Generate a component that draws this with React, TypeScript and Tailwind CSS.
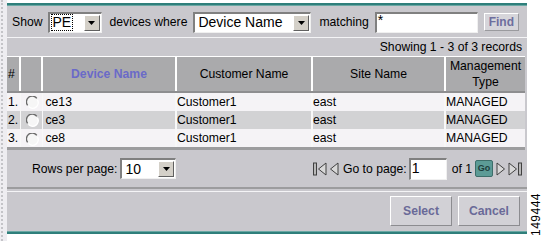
import React from 'react';

const font = { fontFamily: '"Liberation Sans", Arial, sans-serif' };

/**
 * Classic inset select box with a grey arrow button
 */
function OldSelect({ value, width, dotted }: { value: string; width: string; dotted?: boolean }) {
  return (
    <div
      className={`${width} shrink-0 h-[21px] flex items-stretch bg-white border-t-2 border-l-2 border-t-[#808080] border-l-[#808080] border-b border-r border-b-[#f0f0f0] border-r-[#f0f0f0]`}
    >
      <div className="flex-1 flex items-center pl-[2px] min-w-0">
        <span
          className={`text-[14px] leading-[15px] text-black px-[1px] whitespace-nowrap ${dotted ? 'outline outline-1 outline-dotted outline-black' : ''}`}
        >
          {value}
        </span>
      </div>
      <div className="w-[16px] m-[1px] bg-[#d4d0c8] flex items-center justify-center border-t border-l border-t-white border-l-white border-b border-r border-b-[#606060] border-r-[#606060]">
        <svg width="7" height="4" viewBox="0 0 7 4">
          <polygon points="0,0 7,0 3.5,4" fill="#000" />
        </svg>
      </div>
    </div>
  );
}

function Radio() {
  return (
    <svg width="13" height="13" viewBox="0 0 13 13">
      <circle cx="6.5" cy="6.5" r="6" fill="#f6f6f6" />
      <path d="M10.8 2.4 A5.6 5.6 0 0 0 1.6 9.4" fill="none" stroke="#6a6a6a" strokeWidth="1.4" />
      <path d="M2.6 10.6 A5.6 5.6 0 0 0 11.4 3.8" fill="none" stroke="#ffffff" strokeWidth="1.4" />
    </svg>
  );
}

function Tri({ dir, bar }: { dir: 'l' | 'r'; bar?: boolean }) {
  const w = bar ? 14 : 9;
  return (
    <svg width={w} height="14" viewBox={`0 0 ${w} 14`} className="shrink-0">
      {dir === 'l' ? (
        <>
          {bar && <rect x="0.5" y="1" width="3" height="12" fill="#b8b8b8" stroke="#404040" strokeWidth="1" />}
          <polygon
            points={`${w - 1},1 ${w - 1},13 ${w - 8.5},7`}
            fill="#d8d8d8"
            stroke="#404040"
            strokeWidth="1"
          />
        </>
      ) : (
        <>
          <polygon points="1,1 1,13 8.5,7" fill="#d8d8d8" stroke="#404040" strokeWidth="1" />
          {bar && <rect x={w - 3.5} y="1" width="3" height="12" fill="#b8b8b8" stroke="#404040" strokeWidth="1" />}
        </>
      )}
    </svg>
  );
}

const rows = [
  { n: '1.', dev: 'ce13', cust: 'Customer1', site: 'east', type: 'MANAGED' },
  { n: '2.', dev: 'ce3', cust: 'Customer1', site: 'east', type: 'MANAGED' },
  { n: '3.', dev: 'ce8', cust: 'Customer1', site: 'east', type: 'MANAGED' },
];

export default function App() {
  return (
    <div className="w-[544px] h-[241px] bg-white flex text-[12.2px] text-black whitespace-nowrap" style={font}>
      {/* left dotted strip */}
      <div className="w-[7px] shrink-0 h-full bg-[#eeedf1] flex justify-start">
        <div className="w-[2px] ml-[1px] h-full border-l-2 border-dotted border-[#c4c4c8]" />
      </div>

      {/* main panel */}
      <div className="w-[520px] shrink-0 flex flex-col">
        <div className="h-[3px] bg-white" />
        <div className="h-[3px] bg-[#2f7f7b] border-b border-[#6aa8a4]" />

        <div className="flex-1 bg-[#c9c8cd] flex flex-col">
          {/* filter row */}
          <div className="h-[31px] flex items-center pl-[5px] pt-[1px]">
            <span className="shrink-0">Show</span>
            <div className="ml-[5px]">
              <OldSelect value="PE" width="w-[54px]" dotted />
            </div>
            <span className="ml-[8px] shrink-0">devices where</span>
            <div className="ml-[6px]">
              <OldSelect value="Device Name" width="w-[118px]" />
            </div>
            <span className="ml-[8px] shrink-0">matching</span>
            <div className="ml-[6px] shrink-0 w-[103px] h-[21px] bg-white border-t-2 border-l-2 border-t-[#808080] border-l-[#808080] border-b border-r border-b-[#f0f0f0] border-r-[#f0f0f0] text-[14px] leading-[12px] pl-[1px]">
              *
            </div>
            <div className="ml-[6px] shrink-0 w-[35px] h-[18px] bg-[#d6d5da] border border-t-white border-l-white border-b-[#9a9a9e] border-r-[#9a9a9e] flex items-center justify-center text-[12px] font-bold text-[#6e6e9e]">
              Find
            </div>
          </div>

          <div className="h-[1px] bg-[#f4f4f6]" />

          {/* record count */}
          <div className="h-[18px] flex items-center justify-end pr-[5px]">Showing 1 - 3 of 3 records</div>

          {/* table */}
          <table className="border-collapse w-[518px] table-fixed">
            <colgroup>
              <col className="w-[13px]" />
              <col className="w-[22px]" />
              <col className="w-[134px]" />
              <col className="w-[136px]" />
              <col className="w-[133px]" />
              <col className="w-[80px]" />
            </colgroup>
            <thead>
              <tr className="h-[34px] bg-[#aaaaac] border-t border-white">
                <th className="text-left font-normal pl-[1px]">#</th>
                <th className="border-l-2 border-white" />
                <th className="border-l-2 border-white font-bold text-[#6a6ac8]">Device Name</th>
                <th className="border-l-2 border-white font-normal">Customer Name</th>
                <th className="border-l-2 border-white font-normal">Site Name</th>
                <th className="border-l-2 border-white font-normal leading-[16px]">
                  Management
                  <br />
                  Type
                </th>
              </tr>
              <tr className="h-[2px] bg-[#8e8e90]">
                <th colSpan={6} />
              </tr>
            </thead>
            <tbody>
              {rows.map((r, i) => (
                <tr key={r.n} className={`h-[18px] ${i === 1 ? 'bg-[#d2d2d4]' : 'bg-[#f5f3f6]'}`}>
                  <td className="pl-[1px]">{r.n}</td>
                  <td className="border-l border-[#f8f8f8] pl-[5px] pt-[2px]">
                    <Radio />
                  </td>
                  <td className="border-l border-[#f8f8f8] pl-[3px]">{r.dev}</td>
                  <td className="border-l-2 border-[#f8f8f8]">{r.cust}</td>
                  <td className="border-l-2 border-[#f8f8f8]">{r.site}</td>
                  <td className="border-l-2 border-[#f8f8f8]">{r.type}</td>
                </tr>
              ))}
            </tbody>
          </table>
          <div className="h-[3px] w-[518px] bg-[#9c9c9e]" />

          {/* pagination */}
          <div className="h-[37px] flex items-center pl-[25px] pr-[5px]">
            <span>Rows per page:</span>
            <div className="ml-[3px]">
              <OldSelect value="10" width="w-[56px]" />
            </div>
            <div className="flex-1" />
            <div className="flex items-center gap-[3px]">
              <Tri dir="l" bar />
              <Tri dir="l" />
            </div>
            <span className="ml-[4px]">Go to page:</span>
            <div className="ml-[2px] shrink-0 w-[38px] h-[22px] bg-white border-t-2 border-l-2 border-t-[#808080] border-l-[#808080] border-b border-r border-b-[#f0f0f0] border-r-[#f0f0f0] text-[14px] leading-[16px] pl-[1px]">
              1
            </div>
            <span className="ml-[5px]">of 1</span>
            <div className="ml-[3px] shrink-0 w-[18px] h-[17px] rounded-[2px] bg-[#5c9b96] border border-[#3d6e6a] flex items-center justify-center text-[9px] font-bold text-[#1e3e3c]">
              Go
            </div>
            <div className="ml-[3px] flex items-center gap-[3px]">
              <Tri dir="r" />
              <Tri dir="r" bar />
            </div>
          </div>

          <div className="h-[2px] bg-[#9c9c9e]" />
          <div className="h-[2px]" />
          <div className="h-[1px] bg-[#f4f4f6]" />

          {/* action buttons */}
          <div className="h-[38px] flex items-center justify-end gap-[6px] pr-[7px]">
            <div className="w-[62px] h-[30px] bg-[#d2d1d6] border border-t-white border-l-white border-b-[#8c8c90] border-r-[#8c8c90] flex items-center justify-center font-bold text-[#6a6a98]">
              Select
            </div>
            <div className="w-[62px] h-[30px] bg-[#d2d1d6] border border-t-white border-l-white border-b-[#8c8c90] border-r-[#8c8c90] flex items-center justify-center font-bold text-[#6a6a98]">
              Cancel
            </div>
          </div>
        </div>

        <div className="h-[3px] bg-[#2f7f7b] border-t border-[#6aa8a4]" />
        <div className="h-[7px] bg-white" />
      </div>

      {/* figure number */}
      <div className="flex-1 flex items-end justify-center pb-[5px]">
        <span className="[writing-mode:vertical-rl] rotate-180 text-[12px] leading-[12px] tracking-[0.5px]">149444</span>
      </div>
    </div>
  );
}
